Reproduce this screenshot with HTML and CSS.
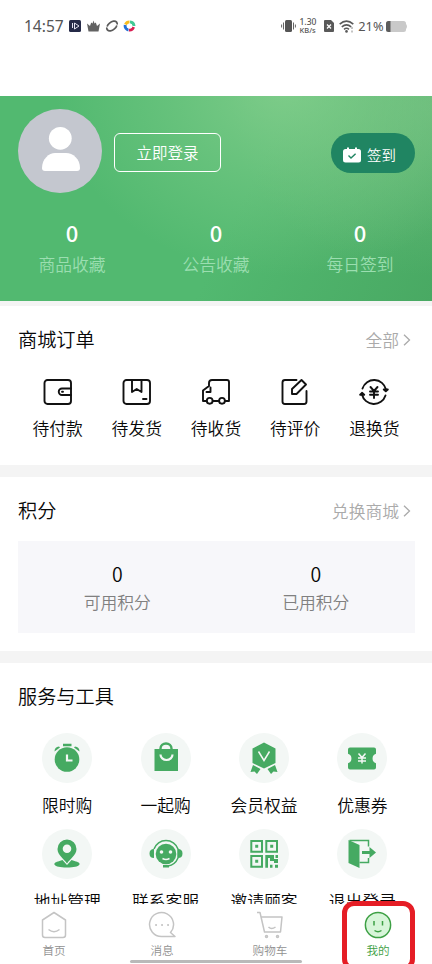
FILE: index.html
```html
<!DOCTYPE html>
<html lang="zh-CN">
<head>
<meta charset="utf-8">
<meta name="viewport" content="width=device-width, initial-scale=1">
<title>我的</title>
<link rel="stylesheet" href="styles.css">
</head>
<body>
<div class="phone">
  <header class="status">
    <span class="clock">14:57</span>
    <svg class="status-left" width="68" height="14" viewBox="0 0 68 14">
      <rect x="0" y="1" width="12" height="12" rx="1.5" fill="#252a48"/>
      <path d="M3.500 4v5M5.500 4l4.500 3-4.500 3z" fill="none" stroke="#e4e4f2" stroke-width="1"/>
      <path d="M18 4.500l3 2.500 1.200-3.500 1.300 1L24.500 1.500l1 3 1.300-1L28 7l3-2.500-1.500 8h-10z" fill="#626262"/>
      <ellipse cx="43" cy="7" rx="6" ry="3.800" transform="rotate(-40 43 7)" fill="none" stroke="#5b5b5b" stroke-width="1.700"/>
      <path d="M36.500 7.500l3 1M49.500 6.500l-3-1" stroke="#fff" stroke-width="1"/>
      <g fill="none" stroke-width="3"><path d="M56.500 5.500A4.300 4.300 0 0 1 60.500 3" stroke="#f7bd20"/><path d="M61 3a4.300 4.300 0 0 1 4 4" stroke="#42c995"/><path d="M64.500 8a4.300 4.300 0 0 1-4.500 3" stroke="#d91d51"/><path d="M59.500 11a4.300 4.300 0 0 1-3.300-5" stroke="#236fd6"/></g>
      <circle cx="60.700" cy="7" r="2.600" fill="#fff"/>
    </svg>
    <svg class="vibrate" width="15" height="14" viewBox="0 0 15 14"><rect x="4" y="1" width="7" height="12" rx="1.500" fill="#555"/><path d="M2.500 3.500v7M12.500 3.500v7M.6 5.500v3M14.400 5.500v3" stroke="#666" stroke-width="1"/></svg>
    <span class="rate"><span class="speed">1.30</span><span class="unit">KB/s</span></span>
    <svg class="sim" width="10" height="12" viewBox="0 0 10 12"><path d="M1 0h6l3 3v8q0 1-1 1H1q-1 0-1-1V1q0-1 1-1z" fill="#595959"/><path d="M3 4.500l4 4M7 4.500l-4 4" stroke="#fff" stroke-width="1.300"/></svg>
    <svg class="wifi" width="15" height="13" viewBox="0 0 15 13"><g fill="none" stroke="#595959" stroke-width="1.600"><path d="M.7 4.200Q7.500-1.800 14.300 4.200M2.800 6.900q4.700-4 9.400 0M5 9.300q2.500-2 5 0"/></g><circle cx="7.500" cy="11.400" r="1.300" fill="#595959"/><path d="M13 7v2M13 10.500v2" stroke="#888"/></svg>
    <span class="percent">21%</span>
    <svg class="battery" width="22" height="11" viewBox="0 0 22 11"><rect width="20" height="11" rx="2.500" fill="#c9c9c9"/><path d="M2.500 0H4.500v11H2.500Q0 11 0 8.500v-6Q0 0 2.500 0z" fill="#5c5c5c"/><path d="M20 3q2 2.500 0 5z" fill="#c9c9c9"/></svg>
  </header>

  <section class="hero">
    <div class="profile">
      <svg class="avatar" viewBox="0 0 84 84"><circle cx="42" cy="42" r="42" fill="#c4c7cf"/><circle cx="42.300" cy="29.300" r="11.400" fill="#fff"/><path d="M24 59C24 50 31 44 37 44h11c7 0 14 6 14 15 0 2-1 3-3 3H27c-2 0-3-1-3-3z" fill="#fff"/></svg>
      <button class="login">立即登录</button>
      <button class="checkin">
        <svg width="18" height="16" viewBox="0 0 18 16"><rect y="2" width="18" height="13.500" rx="2.500" fill="#fff"/><path d="M5 .5v4M13 .5v4" stroke="#fff" stroke-width="2"/><path d="M5.500 8.500L8 11l4.600-4.300" fill="none" stroke="#208562" stroke-width="1.400"/></svg>
        <span>签到</span>
      </button>
    </div>
    <div class="stats">
      <div><strong>0</strong><span>商品收藏</span></div>
      <div><strong>0</strong><span>公告收藏</span></div>
      <div><strong>0</strong><span>每日签到</span></div>
    </div>
  </section>

  <section class="panel orders">
    <div class="heading"><h2>商城订单</h2><a>全部<svg width="8" height="12" viewBox="0 0 8 12"><path d="M1 .8L6.500 6 1 11.200"/></svg></a></div>
    <div class="order-list">
      <div><svg viewBox="0 0 30 28"><rect x="1.500" y="2" width="26.500" height="24" rx="3"/><path d="M28 10.500H19a3 3 0 0 0 0 6.500h9"/><path d="M19 13.700h1"/></svg><span>待付款</span></div>
      <div><svg viewBox="0 0 30 28"><rect x="1.500" y="2" width="26.500" height="24" rx="3"/><path d="M10 2v12l4.700-3 4.800 3V2M21 21h3.500"/></svg><span>待发货</span></div>
      <div><svg viewBox="0 0 30 28"><path d="M5.500 23H2V12.500L8 8V5q0-3 3-3h15q2 0 2 2v19h-3.500M12 23h5.500M9.500 9.500V14H5.500"/><circle cx="8.700" cy="22.800" r="2.900"/><circle cx="21" cy="22.800" r="2.900"/></svg><span>待收货</span></div>
      <div><svg viewBox="0 0 30 28"><path d="M16.500 2H5Q2.500 2 2.500 4.500v19Q2.500 26 5 26h19q2.500 0 2.500-2.500V13"/><path d="M12 16v-5l9.500-9 4.500 4.500-9.500 9.500z"/></svg><span>待评价</span></div>
      <div><svg viewBox="0 0 30 28"><path d="M3.500 10.500A12.200 12.200 0 0 1 27 11.500M26.500 17.500A12.200 12.200 0 0 1 3 16.500"/><path class="solid" d="M24.800 11.500h4l-2 1.800zM1.200 16.700h4L3 14.800z"/><path d="M11.500 9l3.500 4 3.500-4M15 13v7M11 13.500h8M11 16.800h8"/></svg><span>退换货</span></div>
    </div>
  </section>

  <section class="panel points">
    <div class="heading"><h2>积分</h2><a>兑换商城<svg width="8" height="12" viewBox="0 0 8 12"><path d="M1 .8L6.500 6 1 11.200"/></svg></a></div>
    <div class="point-box">
      <div><strong>0</strong><span>可用积分</span></div>
      <div><strong>0</strong><span>已用积分</span></div>
    </div>
  </section>

  <section class="panel services">
    <h2>服务与工具</h2>
    <div class="service-grid">
      <div><svg viewBox="0 0 50 50"><circle cx="25" cy="26.500" r="12.300"/><path d="M21 10.800h8.500v2.400H21zM12.500 18.500q0-4.500 4.500-5l1 1zM37.500 18.500q0-4.500-4.500-5l-1 1z"/><path class="cut" d="M25 21.500v6h5.500"/></svg><span>限时购</span></div>
      <div><svg viewBox="0 0 50 50"><path d="M13.500 16h23.500v22H13.500z"/><path class="mark" d="M19.500 17v-1.500a5.500 5 0 0 1 11 0V17"/><path class="cut" d="M19.500 21.500a6 5.500 0 0 0 12 0"/></svg><span>一起购</span></div>
      <div><svg viewBox="0 0 50 50"><path d="M25 9.500l11.500 6v14.500L25 35.500 13.500 30V15.500zM14 32l7.500 4-3.500 5-2.500-2.500-4 .5zM36 32l-7.500 4 3.500 5 2.500-2.500 4 .5z"/><path class="cut thin" d="M19.500 18.500L25 27.500l5.500-9"/></svg><span>会员权益</span></div>
      <div><svg viewBox="0 0 50 50"><path d="M13 14.500h24q2 0 2 2v4.200a5 5 0 0 0 0 9.500V34.500q0 2-2 2H13q-2 0-2-2v-4.300a5 5 0 0 0 0-9.500v-4.200q0-2 2-2z"/><path class="cut thin" d="M21.500 20.500l3.500 4 3.500-4M21 25h8M21 28h8M25 24.500v6"/></svg><span>优惠券</span></div>
      <div><svg viewBox="0 0 50 50"><path d="M16 32.500C10 34 10.500 38.500 25 38.500S40 34 34 32.500L29.500 31 25 36l-4.500-5z"/><path fill-rule="evenodd" d="M25 10.500a9.500 9.500 0 0 0-9.500 9.500c0 6 6.500 10 9.500 14.500 3-4.500 9.500-8.500 9.500-14.500A9.500 9.500 0 0 0 25 10.500zM25 15.500a4.300 4.300 0 1 1 0 8.600 4.300 4.300 0 0 1 0-8.600z"/></svg><span>地址管理</span></div>
      <div><svg viewBox="0 0 50 50"><circle cx="25" cy="25" r="10.300"/><path class="mark thin" d="M13 20a12.700 12.700 0 0 1 24 0v9q-3 7-10 8"/><path d="M13 20q-4.500 0-4.500 4.500t4.500 4.500zM37 20q4.500 0 4.500 4.500t-4.500 4.500zM22 36h6v2.500h-6z"/><circle class="light" cx="20.500" cy="23" r="1.800"/><circle class="light" cx="29.500" cy="23" r="1.800"/><path class="cut thin" d="M21.500 29.500q3.500 2 7 0"/></svg><span>联系客服</span></div>
      <div><svg viewBox="0 0 50 50"><path class="mark qr" d="M12.300 12h10.700v10.700H12.300zM27.300 12h10.700v10.700H27.300zM12.300 27h10.700v10.700H12.300z"/><path d="M16.200 15.800h3v3h-3zM31.200 15.800h3v3h-3zM16.200 30.800h3v3h-3zM26.300 26H35v4h4v4h-4v-2h-4v-3h-2v9.700h-2.700zM36.500 26H39v3h-2.500zM31 35.700h2.500v3H31zM36 35.700h3v3h-3z"/></svg><span>邀请顾客</span></div>
      <div><svg viewBox="0 0 50 50"><path d="M11.500 11l11 5v23l-11-5zM25 22h7.500v-4l6.500 5.500-6.500 5.500v-4H25z"/><path class="mark thin" d="M12.500 11.500h19v6M31.500 29v4.500h-9"/></svg><span>退出登录</span></div>
    </div>
  </section>

  <nav class="tabs">
    <a><svg viewBox="0 0 28 28"><path d="M14 1.500L25.500 9v15q0 2.500-2.500 2.500H5Q2.500 26.500 2.500 24V9zM8.500 18.500q5.500 4.500 11 0"/></svg><span>首页</span></a>
    <a><svg viewBox="0 0 28 28"><path d="M22.500 21.500A12 12 0 1 0 14 25.500h13z"/><path class="dots" d="M8 14h.1M14 14h.1M20 14h.1"/></svg><span>消息</span></a>
    <a><svg viewBox="0 0 28 28"><path d="M1 1.500h3l4.500 19.500h16l1.500-15H5M12.500 16q3 3 7 0"/><circle cx="10.500" cy="25.500" r="1"/><circle cx="21.500" cy="25.500" r="1"/></svg><span>购物车</span></a>
    <a class="active"><svg viewBox="0 0 28 28"><circle cx="14" cy="14" r="12.600"/><path d="M10 10v4.500M18.500 10v4.500M10.500 19.500q3.500 2.500 7 0"/></svg><span>我的</span></a>
    <i class="home-bar"></i>
    <i class="highlight"></i>
  </nav>
</div>
</body>
</html>
```
FILE: styles.css
```css
* { box-sizing: border-box; }
body { margin: 0; background: #fff; color: #080808; font-family: "Noto Sans CJK SC", sans-serif; font-weight: 350; }
.phone { width: 432px; height: 964px; overflow: hidden; }
svg { display: block; flex: none; }
h2 { margin: 0; font-size: 19.2px; font-weight: inherit; line-height: 27px; padding-bottom: 1px; }
button { border: 0; padding: 0; font: inherit; color: #fff; }

.status { display: flex; align-items: center; height: 96px; padding: 0 24px 44px; color: #555; font-family: "Noto Sans", sans-serif; font-weight: 400; }
.clock { width: 45px; font-size: 15.5px; line-height: 20px; }
.vibrate { margin-left: 144px; }
.rate { display: flex; flex-direction: column; width: 20px; margin-left: 4px; font-weight: 500; line-height: 8px; white-space: nowrap; }
.speed { font-size: 8.5px; }
.unit { font-size: 7.5px; }
.sim { margin-left: 5px; }
.wifi { margin-left: 5px; }
.percent { width: 26px; margin-left: 4px; font-size: 12.8px; white-space: nowrap; }
.battery { margin-left: 2px; }

.hero { height: 205px; padding-top: 13px; background: radial-gradient(ellipse 230px 190px at 285px -10px, rgba(132, 207, 141, .85), rgba(132, 207, 141, .4) 50%, rgba(132, 207, 141, 0)), radial-gradient(ellipse 200px 170px at 432px 10px, rgba(115, 190, 128, .7), rgba(115, 190, 128, 0)), linear-gradient(115deg, #52b970 55%, #49a963 100%); }
.profile { display: flex; align-items: center; height: 84px; padding: 0 17px 0 18px; }
.avatar { width: 84px; height: 84px; }
.login { width: 107px; height: 39px; margin: 3px 0 0 12px; border: 1px solid #fff; border-radius: 6px; background: none; font-size: 15.5px; line-height: 36px; padding-bottom: 2px; }
.checkin { display: flex; align-items: center; gap: 6px; width: 84px; height: 40px; margin: 4px 0 0 auto; padding: 4px 0 0 12px; border-radius: 20px; background: #208562; font-size: 14.4px; line-height: 24px; }
.stats { display: grid; grid-template-columns: repeat(3, 1fr); margin-top: 24px; text-align: center; }
.stats strong, .stats span, .point-box strong, .point-box span { display: block; }
.stats strong { height: 31px; color: #fff; font-size: 22px; font-weight: 500; line-height: 30px; }
.stats span { color: #9bdeb0; font-size: 16.8px; line-height: 32px; }

.panel { border-top: 12px solid #f4f4f4; }
.heading { display: flex; justify-content: space-between; align-items: center; padding: 0 21px 0 18px; }
.heading a { display: flex; align-items: center; gap: 4px; color: #aaa; font-size: 16.8px; line-height: 28px; }
.heading a svg { fill: none; stroke: #aaa; stroke-width: 1.3; }
.orders { height: 164px; padding-top: 20px; border-top-width: 5px; }
.order-list { display: grid; grid-template-columns: repeat(5, 1fr); margin: 24px 18px 0; }
.order-list div { display: flex; flex-direction: column; align-items: center; gap: 9px; }
.order-list svg { width: 30px; height: 28px; fill: none; stroke: #111; stroke-width: 1.9; stroke-linecap: round; stroke-linejoin: round; }
.order-list .solid { fill: #111; }
.order-list span { font-size: 16.8px; line-height: 26px; }
.points { height: 186px; padding-top: 20px; }
.point-box { display: grid; grid-template-columns: 1fr 1fr; height: 92px; margin: 16px 17px 0 18px; padding-top: 18px; background: #f7f7fa; text-align: center; }
.point-box strong { font-size: 19.5px; font-weight: inherit; line-height: 29px; }
.point-box span { color: #808080; font-size: 16.8px; line-height: 28px; }
.services { height: 253px; padding-top: 20px; overflow: hidden; }
.services h2 { padding-left: 18px; }
.service-grid { display: grid; grid-template-columns: repeat(4, 98.4px); grid-auto-rows: 96px; margin: 22px 0 0 18px; }
.service-grid div { display: flex; flex-direction: column; align-items: center; gap: 9px; }
.service-grid svg { width: 50px; height: 50px; border-radius: 50%; background: #f3f7f5; fill: #46aa62; }
.service-grid span { font-size: 16.8px; line-height: 26px; }
.service-grid .cut { fill: none; stroke: #f3f7f5; stroke-width: 2.2; }
.service-grid .mark { fill: none; stroke: #46aa62; stroke-width: 2.4; }
.service-grid .thin { stroke-width: 1.5; }
.service-grid .qr { stroke-width: 2; }
.service-grid .light { fill: #f3f7f5; }

.tabs { position: relative; display: grid; grid-template-columns: repeat(4, 1fr); height: 60px; padding-top: 7px; background: #fff; }
.tabs a { display: flex; flex-direction: column; align-items: center; gap: 2px; color: #919191; font-size: 11.6px; line-height: 18px; }
.tabs a svg { width: 28px; height: 28px; fill: none; stroke: #c4c4c4; stroke-width: 1.5; stroke-linejoin: round; }
.tabs .dots { stroke-width: 2; stroke-linecap: round; }
.tabs .active { color: #3da044; }
.tabs .active svg { stroke: #3da044; }
.tabs .active circle { fill: #d7f5d9; }
.home-bar { position: absolute; left: 130px; top: 56px; width: 172px; height: 3px; border-radius: 2px; background: #b9b9b9; }
.highlight { position: absolute; left: 342px; top: -3px; width: 73px; height: 70px; border: 5px solid #e51d25; border-radius: 12px; }
```
